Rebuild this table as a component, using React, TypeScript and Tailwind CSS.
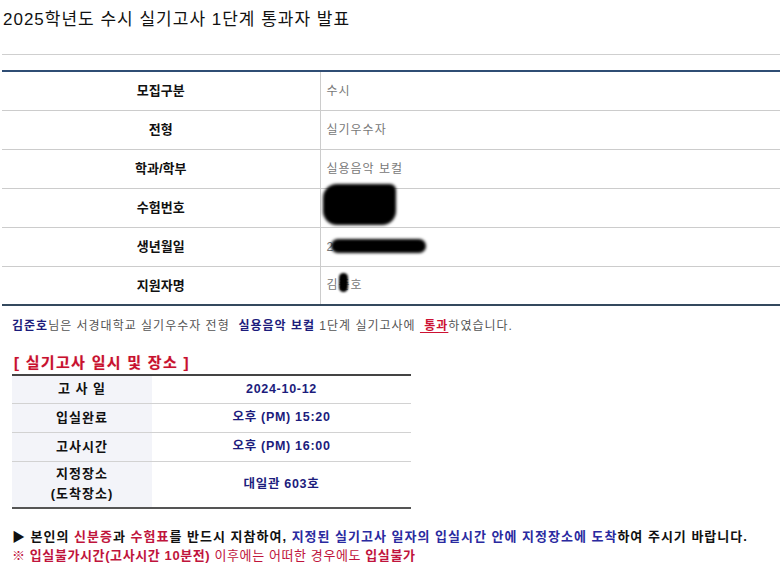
const rows = [
  { label: "모집구분", value: "수시" },
  { label: "전형", value: "실기우수자" },
  { label: "학과/학부", value: "실용음악 보컬" },
  { label: "수험번호", value: "" },
  { label: "생년월일", value: "2" },
  { label: "지원자명", value: "김준호" },
];

const schedule = [
  { label: "고 사 일", value: "2024-10-12", h: "h-[28px]" },
  { label: "입실완료", value: "오후 (PM) 15:20", h: "h-[29px]" },
  { label: "고사시간", value: "오후 (PM) 16:00", h: "h-[29px]" },
  { label: "지정장소\n(도착장소)", value: "대일관 603호", h: "h-[47px]" },
];

// 가려진 개인정보 (스크린샷의 낙서 마스킹)
function Redacted({ label }: { label: string }) {
  if (label === "수험번호") {
    return (
      <div className="absolute left-[2px] top-[-5px] h-[41px] w-[73px] rounded-[14px] rounded-tr-[6px] bg-black blur-[1.5px]" />
    );
  }
  if (label === "생년월일") {
    return (
      <div className="relative">
        <span>2</span>
        <div className="absolute left-[4px] top-[1px] h-[14px] w-[95px] rounded-full bg-black blur-[1.5px]" />
      </div>
    );
  }
  return (
    <div className="relative">
      <span>김준호</span>
      <div className="absolute left-[12px] top-[-3px] h-[19px] w-[9px] rounded-full bg-black blur-[0.8px]" />
    </div>
  );
}

export default function App() {
  return (
    <div
      className="h-[575px] w-[780px] overflow-hidden bg-white pl-[2px]"
      style={{ fontFamily: '"Liberation Sans", "Noto Sans CJK KR", sans-serif' }}
    >
      <h1 className="pl-[1px] pt-[8px] text-[17px] leading-[24px] tracking-[1px] text-[#111]">
        2025학년도 수시 실기고사 1단계 통과자 발표
      </h1>
      <div className="mt-[22px] border-t border-[#cfcfcf]" />

      <table className="mt-[15px] w-full border-collapse border-t-2 border-t-[#2f4d74] border-b-2 border-b-[#34495e] text-[13px]">
        <tbody>
          {rows.map((r, i) => (
            <tr
              key={r.label}
              className={`h-[39px] ${i < rows.length - 1 ? "border-b border-[#cccccc]" : ""}`}
            >
              <th className="w-[318px] border-r border-[#cccccc] text-center font-bold text-[#111]">
                {r.label}
              </th>
              <td className="relative pl-[6px] text-[12px] tracking-[1px] text-[#777]">
                {i >= 3 ? <Redacted label={r.label} /> : r.value}
              </td>
            </tr>
          ))}
        </tbody>
      </table>

      <div className="pl-[10px]">
        <p className="mt-[12px] text-[12px] leading-[16px] tracking-[1px] text-[#555]">
          <b className="text-[#1c1c7c]">김준호</b>님은 서경대학교 실기우수자 전형{" "}
          <b className="text-[#1c1c7c]">&nbsp;실용음악 보컬</b> 1단계 실기고사에{" "}
          <b className="text-[#cc1133] underline underline-offset-2">&nbsp;통과</b>하였습니다.
        </p>

        <h2
          className="mt-[19px] pl-[2px] text-[15px] font-bold leading-[20px] tracking-[1.3px] text-[#c8102e]"
          style={{ textShadow: "0 0 1px rgba(200,16,46,0.35)" }}
        >
          [ 실기고사 일시 및 장소 ]
        </h2>

        <table className="mt-[1px] w-[399px] border-collapse border-t-2 border-t-[#444] border-b-2 border-b-[#555] text-[13px] font-bold">
          <tbody>
            {schedule.map((s, i) => (
              <tr
                key={s.label}
                className={`${s.h} ${i < schedule.length - 1 ? "border-b border-[#d2d2d2]" : ""}`}
              >
                <th className="w-[140px] whitespace-pre-line bg-[#f3f4f9] text-center leading-[20px] tracking-[1px] text-[#111]">
                  {s.label}
                </th>
                <td className="text-center text-[12.5px] tracking-[0.7px] text-[#1c1c7c]">{s.value}</td>
              </tr>
            ))}
          </tbody>
        </table>

        <p className="mt-[18px] text-[13px] font-bold leading-[19px] tracking-[1px] text-[#111]">
          ▶ 본인의 <span className="text-[#c0143c]">신분증</span>과{" "}
          <span className="text-[#c0143c]">수험표</span>를 반드시 지참하여,{" "}
          <span className="text-[#2a2aa0]">
            지정된 실기고사 일자의 입실시간 안에 지정장소에 도착
          </span>
          하여 주시기 바랍니다.
        </p>
        <p className="text-[13px] leading-[19px] tracking-[0.6px] text-[#c0143c]">
          ※ <b>입실불가시간(고사시간 10분전)</b> 이후에는 어떠한 경우에도 <b>입실불가</b>
        </p>
      </div>
    </div>
  );
}
